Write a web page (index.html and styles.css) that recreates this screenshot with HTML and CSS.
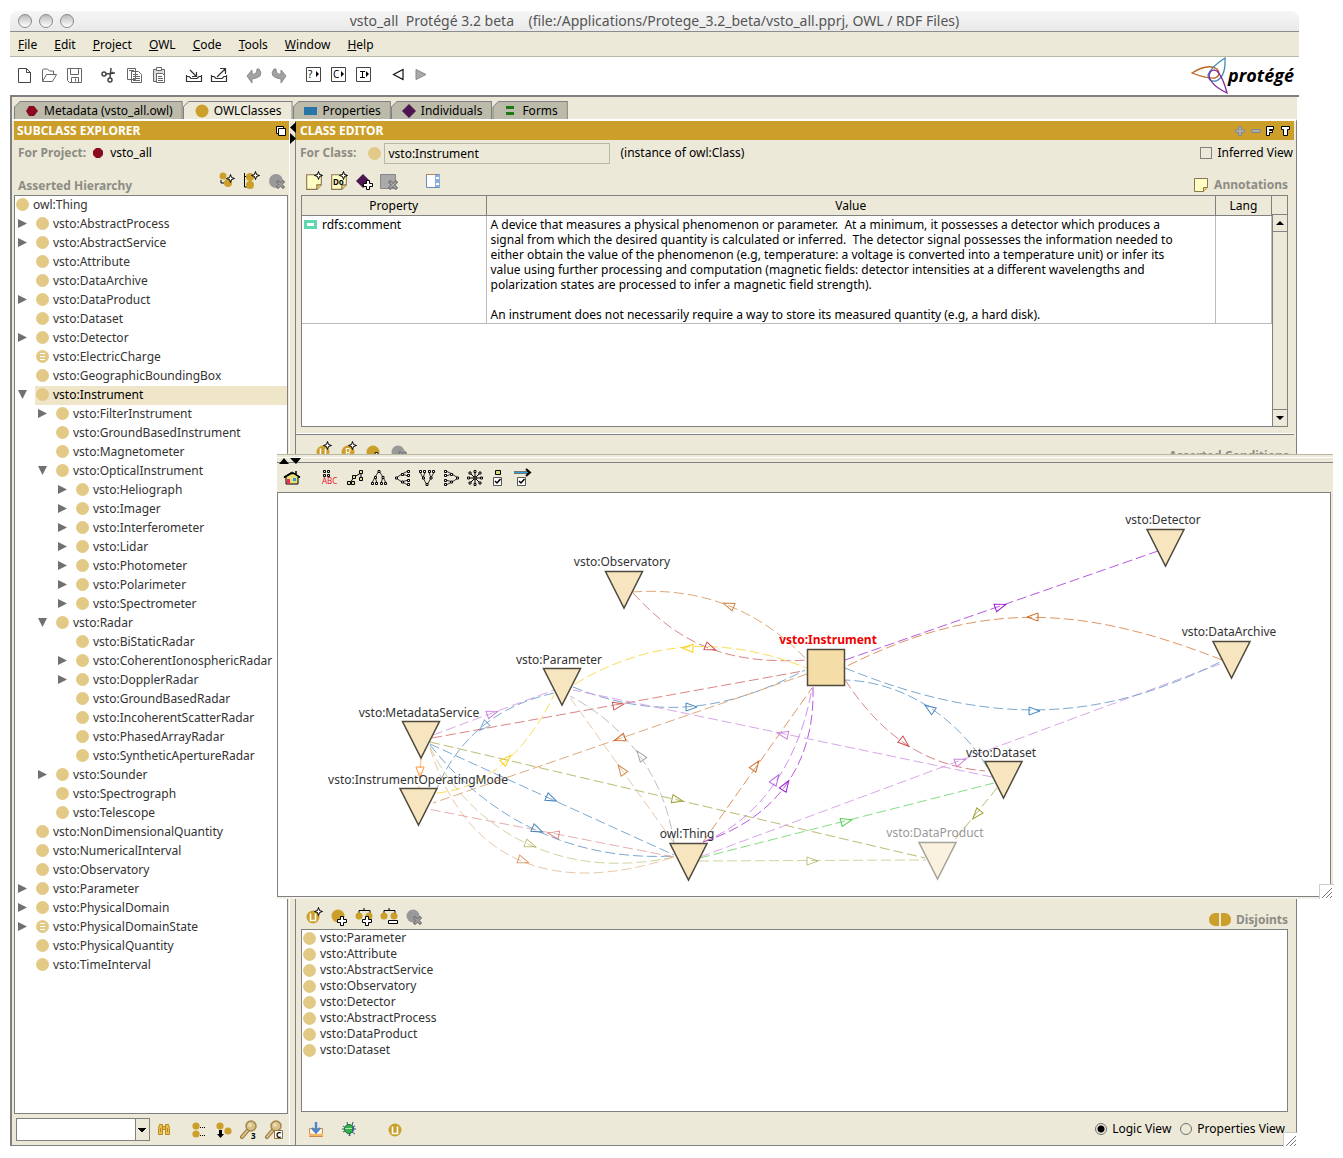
FILE: index.html
```html
<!DOCTYPE html>
<html lang="en">
<head>
<meta charset="utf-8">
<title>vsto_all Protégé 3.2 beta</title>
<link rel="stylesheet" href="styles.css">
</head>
<body>
<svg class="defs" aria-hidden="true">
  <symbol id="star" viewBox="0 0 9 9"><path d="M4.500 .5L5.500 3.500L8.500 4.500L5.500 5.500L4.500 8.500L3.500 5.500L.5 4.500L3.500 3.500Z" fill="#fff" stroke="#000"/></symbol>
  <symbol id="plus" viewBox="0 0 10 10"><path d="M3.500 .5h3v3h3v3h-3v3h-3v-3h-3v-3h3z" fill="#fff" stroke="#000"/></symbol>
  <symbol id="cross" viewBox="0 0 10 10"><path d="M1 1L9 9M9 1L1 9" stroke="#777" stroke-width="3.500"/><path d="M2 2L8 8M8 2L2 8" stroke="#aaa" stroke-width="1.200"/></symbol>
  <symbol id="u" viewBox="0 0 20 20"><circle cx="9" cy="11" r="6.500" fill="#cb9f29"/><path d="M6.500 7.500v7h5v-7" fill="none" stroke="#fff" stroke-width="1.600"/></symbol>
  <symbol id="note" viewBox="0 0 16 16"><path d="M1.500 1.500h13v9l-4 4h-9z" fill="#ffffc4" stroke="#8b7355"/><path d="M10.500 14.500v-4h4" fill="#e8d85e" stroke="#8b7355"/></symbol>
  <symbol id="lens" viewBox="0 0 18 20"><path d="M2 17L8 10" stroke="#8e7238" stroke-width="4" stroke-linecap="round"/><path d="M2 17L8 10" stroke="#d8bd84" stroke-width="2" stroke-linecap="round"/><circle cx="11" cy="6" r="5" fill="#d9c08b" stroke="#a4874b" stroke-width="1.500"/><circle cx="10" cy="5" r="2" fill="#eadbb4"/></symbol>
  <symbol id="grip" viewBox="0 0 15 15"><path d="M0 15V0h15v15z" fill="#fff"/><path d="M.5 15V.5H15" fill="none" stroke="#ccc"/><path d="M3 14L13 4M7 14L13 8M11 14L13 12" stroke="#777"/></symbol>
</svg>

<main class="window">
  <header class="titlebar">
    <div class="lights"><button aria-label="Close"></button><button aria-label="Minimize"></button><button aria-label="Zoom"></button></div>
    <h1>vsto_all&nbsp; Protégé 3.2 beta&nbsp;&nbsp;&nbsp; (file:/Applications/Protege_3.2_beta/vsto_all.pprj, OWL / RDF Files)</h1>
  </header>
  <nav class="menubar">
    <button><u>F</u>ile</button><button><u>E</u>dit</button><button><u>P</u>roject</button><button><u>O</u>WL</button><button><u>C</u>ode</button><button><u>T</u>ools</button><button><u>W</u>indow</button><button><u>H</u>elp</button>
  </nav>
  <div class="toolbar">
    <div class="group">
      <button aria-label="New"><svg width="20" height="20"><path d="M4.500 3.500h8l4 4v10h-12z M12.500 3.500v4h4" fill="#fff" stroke="#444"/></svg></button>
      <button aria-label="Open"><svg width="20" height="20"><path d="M3.500 16v-11l1-1h4l2 2h4v3M3.500 16.500L7.500 9.500h10l-4 7z" fill="none" stroke="#666"/></svg></button>
      <button aria-label="Save"><svg width="20" height="20"><path d="M3.500 3.500h14v14h-12l-2-2zM6.500 3.500v6h8v-6M7.500 17.500v-5h7v5M11.500 13.500v3" fill="none" stroke="#666"/></svg></button>
    </div>
    <div class="group">
      <button aria-label="Cut"><svg width="20" height="20"><g fill="none" stroke="#444" stroke-width="1.500"><circle cx="5" cy="9" r="2"/><circle cx="11" cy="15" r="2"/><path d="M7 9L16 8M11 13L12 3M11 9l3-2"/></g></svg></button>
      <button aria-label="Copy"><svg width="20" height="20"><g fill="#fff" stroke="#666"><path d="M3.500 3.500h8v11h-8zM7.500 6.500h7l3 3v8h-10zM5 5.500h5M9 9.500h5M9 11.500h7M9 13.500h7M9 15.500h7"/></g></svg></button>
      <button aria-label="Paste"><svg width="20" height="20"><g fill="#fff" stroke="#666"><path d="M4.500 4.500h11v12h-11z" fill="#ddd"/><path d="M7.500 2.500h5v3h-5zM7.500 8.500h6l2 2v7h-8zM9 11.500h4M9 13.500h5M9 15.500h5"/></g></svg></button>
    </div>
    <div class="group">
      <button aria-label="Check out"><svg width="20" height="20"><path d="M2.500 10v6.500h15V10M2 11.500h3l2 2h6l2-2h3M6 5l6 6M8 11.500h4.500V7" fill="none" stroke="#333" stroke-width="1.200"/></svg></button>
      <button aria-label="Check in"><svg width="20" height="20"><path d="M2.500 10v6.500h15V10M2 11.500h3l2 2h6l2-2h3M8 12l8-8M11 3.500h5.500V9" fill="none" stroke="#333" stroke-width="1.200"/></svg></button>
    </div>
    <div class="group">
      <button aria-label="Undo"><svg width="20" height="20"><path d="M3 11l5-6v4q5 1 5-5h2q6 8-7 10v4z" fill="#a2a2a2" stroke="#8a8a8a"/></svg></button>
      <button aria-label="Redo"><svg width="20" height="20"><path d="M17 11l-5-6v4q-5 1-5-5H5q-6 8 7 10v4z" fill="#a2a2a2" stroke="#8a8a8a"/></svg></button>
    </div>
    <div class="group">
      <button aria-label="Query"><svg width="20" height="20"><path d="M2.500 2.500h14v14h-14z" fill="#fff" stroke="#444"/><text x="4" y="13">?</text><path d="M12 6v6l3-3z"/></svg></button>
      <button aria-label="Class"><svg width="20" height="20"><path d="M2.500 2.500h14v14h-14z" fill="#fff" stroke="#444"/><text x="4" y="13">C</text><path d="M12 6v6l3-3z"/></svg></button>
      <button aria-label="Instance"><svg width="20" height="20"><path d="M2.500 2.500h14v14h-14z" fill="#fff" stroke="#444"/><path d="M6 6.500h5M6 12.500h5M8.500 6.500v6" stroke="#000"/><path d="M12 6v6l3-3z"/></svg></button>
    </div>
    <div class="group">
      <button aria-label="Back"><svg width="20" height="20"><path d="M14 4.500v10L4.500 9.500z" fill="#fff" stroke="#111" stroke-width="1.200"/></svg></button>
      <button aria-label="Forward"><svg width="20" height="20"><path d="M2 4.500v10l10-5z" fill="#aaa" stroke="#888"/></svg></button>
    </div>
    <div class="logo">
      <svg width="37" height="38" fill="none" stroke-width="1.300"><path d="M1 16Q17 6 26 12Q31 18 24 21Q17 22 1 16z" stroke="#c0641c"/><path d="M34 1Q35 20 25 24Q17 25 17 18Q20 10 34 1z" stroke="#4289b8"/><path d="M36 36Q19 28 18 18Q20 11 26 14Q32 20 36 36z" stroke="#7d2a9c"/></svg>
      <b>protégé</b>
    </div>
  </div>

  <div class="workspace">
    <div class="tabs" role="tablist">
      <button class="tab" role="tab"><svg width="14" height="12"><path d="M4 1h5l4 5-4 5H4L1 6z" fill="#8a0b1f"/></svg>Metadata (vsto_all.owl)</button>
      <button class="tab active" role="tab" aria-selected="true"><svg width="14" height="14"><circle cx="7" cy="7" r="6.500" fill="#cb9f29"/></svg>OWLClasses</button>
      <button class="tab" role="tab"><svg width="14" height="10"><path d="M0 1h13v8H0z" fill="#2975a8"/></svg>Properties</button>
      <button class="tab" role="tab"><svg width="14" height="14"><path d="M7 0l7 7-7 7-7-7z" fill="#4e1650"/></svg>Individuals</button>
      <button class="tab" role="tab"><svg width="14" height="10"><path d="M3 0h8v3H3zM3 6h8v3H3z" fill="#1d7a12"/></svg>Forms</button>
    </div>

    <div class="panes">
      <section class="explorer">
        <h2 class="band">SUBCLASS EXPLORER <button aria-label="Detach"><svg width="12" height="12"><path d="M1.500 1.500h7v7h-7z" fill="#fff" stroke="#000"/><path d="M3.500 3.500h7v7h-7z" fill="#fff" stroke="#000"/></svg></button></h2>
        <div class="bar for"><b>For Project:</b><svg width="12" height="12"><path d="M4 1h4l3 3v4l-3 3H4L1 8V4z" fill="#8a0b1f"/></svg><span>vsto_all</span></div>
        <div class="bar hierarchy"><b>Asserted Hierarchy</b>
          <div class="icons">
            <button aria-label="Create subclass"><svg width="20" height="20"><g fill="#cb9f29"><circle cx="6" cy="5" r="3.500"/><circle cx="11" cy="12" r="4"/></g><path d="M4 9v3h3" fill="none" stroke="#000"/><use href="#star" x="9" y="3" width="9" height="9"/></svg></button>
            <button aria-label="Create sibling"><svg width="20" height="20"><path d="M2.500 2v14h5M2 5.500h4" fill="none" stroke="#000"/><g fill="#cb9f29"><circle cx="8" cy="6" r="4"/><circle cx="8" cy="14" r="4"/></g><use href="#star" x="9" y="0" width="9" height="9"/></svg></button>
            <button aria-label="Delete class"><svg width="20" height="20"><circle cx="9" cy="10" r="7" fill="#999"/><use href="#cross" x="9" y="9" width="9" height="9"/></svg></button>
          </div>
        </div>
        <ul class="tree">
          <li><span><i class="dot"></i>owl:Thing</span></li>
          <li class="d1 shut"><span><i class="dot"></i>vsto:AbstractProcess</span></li>
          <li class="d1 shut"><span><i class="dot"></i>vsto:AbstractService</span></li>
          <li class="d1"><span><i class="dot"></i>vsto:Attribute</span></li>
          <li class="d1"><span><i class="dot"></i>vsto:DataArchive</span></li>
          <li class="d1 shut"><span><i class="dot"></i>vsto:DataProduct</span></li>
          <li class="d1"><span><i class="dot"></i>vsto:Dataset</span></li>
          <li class="d1 shut"><span><i class="dot"></i>vsto:Detector</span></li>
          <li class="d1"><span><i class="dot eq"></i>vsto:ElectricCharge</span></li>
          <li class="d1"><span><i class="dot"></i>vsto:GeographicBoundingBox</span></li>
          <li class="d1 open selected"><span><i class="dot"></i>vsto:Instrument</span></li>
          <li class="d2 shut"><span><i class="dot"></i>vsto:FilterInstrument</span></li>
          <li class="d2"><span><i class="dot"></i>vsto:GroundBasedInstrument</span></li>
          <li class="d2"><span><i class="dot"></i>vsto:Magnetometer</span></li>
          <li class="d2 open"><span><i class="dot"></i>vsto:OpticalInstrument</span></li>
          <li class="d3 shut"><span><i class="dot"></i>vsto:Heliograph</span></li>
          <li class="d3 shut"><span><i class="dot"></i>vsto:Imager</span></li>
          <li class="d3 shut"><span><i class="dot"></i>vsto:Interferometer</span></li>
          <li class="d3 shut"><span><i class="dot"></i>vsto:Lidar</span></li>
          <li class="d3 shut"><span><i class="dot"></i>vsto:Photometer</span></li>
          <li class="d3 shut"><span><i class="dot"></i>vsto:Polarimeter</span></li>
          <li class="d3 shut"><span><i class="dot"></i>vsto:Spectrometer</span></li>
          <li class="d2 open"><span><i class="dot"></i>vsto:Radar</span></li>
          <li class="d3"><span><i class="dot"></i>vsto:BiStaticRadar</span></li>
          <li class="d3 shut"><span><i class="dot"></i>vsto:CoherentIonosphericRadar</span></li>
          <li class="d3 shut"><span><i class="dot"></i>vsto:DopplerRadar</span></li>
          <li class="d3"><span><i class="dot"></i>vsto:GroundBasedRadar</span></li>
          <li class="d3"><span><i class="dot"></i>vsto:IncoherentScatterRadar</span></li>
          <li class="d3"><span><i class="dot"></i>vsto:PhasedArrayRadar</span></li>
          <li class="d3"><span><i class="dot"></i>vsto:SyntheticApertureRadar</span></li>
          <li class="d2 shut"><span><i class="dot"></i>vsto:Sounder</span></li>
          <li class="d2"><span><i class="dot"></i>vsto:Spectrograph</span></li>
          <li class="d2"><span><i class="dot"></i>vsto:Telescope</span></li>
          <li class="d1"><span><i class="dot"></i>vsto:NonDimensionalQuantity</span></li>
          <li class="d1"><span><i class="dot"></i>vsto:NumericalInterval</span></li>
          <li class="d1"><span><i class="dot"></i>vsto:Observatory</span></li>
          <li class="d1 shut"><span><i class="dot"></i>vsto:Parameter</span></li>
          <li class="d1 shut"><span><i class="dot"></i>vsto:PhysicalDomain</span></li>
          <li class="d1 shut"><span><i class="dot eq"></i>vsto:PhysicalDomainState</span></li>
          <li class="d1"><span><i class="dot"></i>vsto:PhysicalQuantity</span></li>
          <li class="d1"><span><i class="dot"></i>vsto:TimeInterval</span></li>
        </ul>
        <div class="finder">
          <select aria-label="Find class"><option></option></select>
          <button aria-label="Find"><svg width="20" height="20"><g fill="#e8c050" stroke="#b88a1c"><path d="M5.500 4.500h3v10h-4v-6zM11.500 4.500h3l1 4v6h-4z"/><path d="M8.500 6.500h3v3h-3z"/><path d="M6.500 8v4M13.500 8v4"/></g></svg></button>
          <div class="icons">
            <button aria-label="Show subclasses"><svg width="20" height="20"><g fill="#cb9f29"><circle cx="7" cy="6" r="3.600"/><circle cx="7" cy="14" r="3.600"/></g><path d="M11 7.500h6M11 15.500h6" stroke="#000" stroke-dasharray="1 1"/></svg></button>
            <button aria-label="Sort"><svg width="20" height="20"><g fill="#cb9f29"><circle cx="6" cy="6" r="3.600"/><circle cx="14" cy="11" r="3.600"/></g><path d="M5 10h3v4h2l-3.500 4L3 14h2z"/></svg></button>
            <button aria-label="Find usage"><svg width="20" height="20"><use href="#lens" x="1" y="0" width="18" height="20"/><text class="tiny" x="12" y="19">3</text></svg></button>
            <button aria-label="Find in class"><svg width="20" height="20"><use href="#lens" x="1" y="0" width="18" height="20"/><path d="M10.500 10.500h8v8h-8z" fill="#fff" stroke="#8e7238"/><text class="tiny" x="12" y="18">C</text></svg></button>
          </div>
        </div>
      </section>

      <div class="splitter"><svg width="6" height="24"><path d="M6 1v11L0 6.500zM0 12v11l6-5.500z"/></svg></div>

      <section class="editor">
        <h2 class="band">CLASS EDITOR
          <span class="icons"><svg width="57" height="12"><path d="M5.500 1.500h3v3h3v3h-3v3h-3v-3h-3v-3h3zM18.500 4.500h9v3h-9z" fill="#aaa" stroke="#888"/><path d="M33.500 1.500h7v3h-4v1h3v2h-3v3h-3zM48.500 1.500h8v3h-2v6h-4v-6h-2z" fill="#fff" stroke="#000"/></svg></span>
        </h2>
        <div class="bar for">
          <label for="cls">For Class:</label><i class="dot"></i><input id="cls" value="vsto:Instrument"><span>(instance of owl:Class)</span>
          <label class="inferred"><input type="checkbox">Inferred View</label>
        </div>
        <div class="bar tools">
          <div class="icons">
            <button aria-label="New annotation"><svg width="20" height="20"><use href="#note" x="1" y="2" width="18" height="18"/><use href="#star" x="10" y="0" width="9" height="9"/></svg></button>
            <button aria-label="New documentation"><svg width="20" height="20"><use href="#note" x="1" y="2" width="18" height="18"/><text class="tiny" x="4" y="14">Do</text><use href="#star" x="10" y="0" width="9" height="9"/></svg></button>
            <button aria-label="Add resource"><svg width="20" height="20"><path d="M9 3l7 7-7 7-7-7z" fill="#4e1650"/><use href="#plus" x="9" y="9" width="10" height="10"/></svg></button>
            <button aria-label="Delete annotation"><svg width="20" height="20"><path d="M1.500 3.500h15v14h-15z" fill="#aaa" stroke="#888"/><use href="#cross" x="9" y="9" width="10" height="10"/></svg></button>
            <button class="apart" aria-label="Columns"><svg width="20" height="20"><path d="M2.500 3.500h13v13h-13z" fill="#fff" stroke="#6c8cc0"/><path d="M2 3.500h10" stroke="#b08c50"/><path d="M11 4h5v12h-5z" fill="#8aaede"/><path d="M12 6h3v2h-3zM12 12h3v2h-3z" fill="#fff"/></svg></button>
          </div>
          <b><svg width="16" height="16"><use href="#note" width="16" height="16"/></svg>Annotations</b>
        </div>
        <div class="sheet">
          <table>
            <thead><tr><th class="prop">Property</th><th>Value</th><th class="lang">Lang</th></tr></thead>
            <tbody><tr>
              <td><i class="slot"></i>rdfs:comment</td>
              <td>A device that measures a physical phenomenon or parameter.&nbsp; At a minimum, it possesses a detector which produces a<br>signal from which the desired quantity is calculated or inferred.&nbsp; The detector signal possesses the information needed to<br>either obtain the value of the phenomenon (e.g, temperature: a voltage is converted into a temperature unit) or infer its<br>value using further processing and computation (magnetic fields: detector intensities at a different wavelengths and<br>polarization states are processed to infer a magnetic field strength).<br><br>An instrument does not necessarily require a way to store its measured quantity (e.g, a hard disk).</td>
              <td></td>
            </tr></tbody>
          </table>
          <div class="scroll"><div class="corner"></div><button aria-label="Scroll up"><svg width="8" height="4"><path d="M0 4l4-4 4 4z"/></svg></button><div class="track"></div><button aria-label="Scroll down"><svg width="8" height="4"><path d="M0 0l4 4 4-4z"/></svg></button></div>
        </div>
        <div class="conditions">
          <div class="icons">
            <button aria-label="Create expression"><svg width="20" height="20"><use href="#u" width="20" height="20"/><use href="#star" x="9" y="0" width="9" height="9"/></svg></button>
            <button aria-label="Create restriction"><svg width="20" height="20"><circle cx="9" cy="11" r="6.500" fill="#cb9f29"/><text class="white" x="6" y="15">R</text><use href="#star" x="9" y="0" width="9" height="9"/></svg></button>
            <button aria-label="Add class"><svg width="20" height="20"><circle cx="9" cy="11" r="6.500" fill="#cb9f29"/><use href="#plus" x="8" y="11" width="9" height="9"/></svg></button>
            <button aria-label="Delete row"><svg width="20" height="20"><circle cx="9" cy="11" r="6.500" fill="#999"/><use href="#cross" x="9" y="10" width="9" height="9"/></svg></button>
          </div>
          <b>Asserted Conditions</b>
        </div>
        <div class="bar tools">
          <div class="icons">
            <button aria-label="Create disjoint"><svg width="20" height="20"><use href="#u" width="20" height="20"/><use href="#star" x="10" y="1" width="9" height="9"/></svg></button>
            <button aria-label="Add disjoint class"><svg width="20" height="20"><circle cx="9" cy="10" r="6.500" fill="#cb9f29"/><use href="#plus" x="8" y="10" width="10" height="10"/></svg></button>
            <button aria-label="Add all siblings"><svg width="20" height="20"><path d="M5 7V4.500h11V7M10 4V2" fill="none" stroke="#000"/><g fill="#cb9f29"><circle cx="5" cy="10" r="3.500"/><circle cx="15" cy="10" r="3.500"/></g><use href="#plus" x="8" y="10" width="10" height="10"/></svg></button>
            <button aria-label="Remove all siblings"><svg width="20" height="20"><path d="M5 7V4.500h11V7M10 4V2" fill="none" stroke="#000"/><g fill="#cb9f29"><circle cx="5" cy="10" r="3.500"/><circle cx="15" cy="10" r="3.500"/></g><path d="M9.500 14.500h9v3h-9z" fill="#fff" stroke="#000"/></svg></button>
            <button aria-label="Delete disjoint"><svg width="20" height="20"><circle cx="9" cy="10" r="6.500" fill="#999"/><use href="#cross" x="9" y="10" width="9" height="9"/></svg></button>
          </div>
          <b><svg width="22" height="14"><path d="M10 0v13H6Q0 12 0 6.500T6 0zM12 0v13h4q6-1 6-6.500T16 0z" fill="#cb9f29"/></svg>Disjoints</b>
        </div>
        <ul class="disjoints">
          <li><i class="dot"></i>vsto:Parameter</li>
          <li><i class="dot"></i>vsto:Attribute</li>
          <li><i class="dot"></i>vsto:AbstractService</li>
          <li><i class="dot"></i>vsto:Observatory</li>
          <li><i class="dot"></i>vsto:Detector</li>
          <li><i class="dot"></i>vsto:AbstractProcess</li>
          <li><i class="dot"></i>vsto:DataProduct</li>
          <li><i class="dot"></i>vsto:Dataset</li>
        </ul>
        <div class="views">
          <div class="icons">
            <button aria-label="Save view"><svg width="20" height="20"><path d="M3.500 9.500h13v8h-13z" fill="#fff4dc" stroke="#c88b50"/><path d="M3 14l5 1h5l4-1v3H3z" fill="#f3b766"/><path d="M10 3v10M6 9l4 4.500L14 9" fill="none" stroke="#4d86cc" stroke-width="2.400"/></svg></button>
            <button class="bug" aria-label="Run tests"><svg width="20" height="20"><path d="M3 7l12 8M3 13l12-6M7 3l3 14M13 3L9 17M2 10h14" stroke="#33566e"/><circle cx="9" cy="10" r="4.500" fill="#35b24a" stroke="#1d6d38"/><path d="M12 6q4 4 0 8z" fill="#3c6490"/><path d="M5 9.500h7" stroke="#a4eba8"/></svg></button>
            <button class="apart" aria-label="Reason"><svg width="20" height="20"><use href="#u" width="20" height="20"/></svg></button>
          </div>
          <label><input type="radio" name="view" checked>Logic View</label>
          <label><input type="radio" name="view">Properties View</label>
        </div>
      </section>
    </div>
    <svg class="grip" width="15" height="15"><use href="#grip"/></svg>
  </div>
</main>

<aside class="graph">
  <div class="divider"><svg width="24" height="6"><path d="M2 6l5-6 5 6zM13 0h11l-5 6z"/></svg></div>
  <div class="graphbar">
    <button aria-label="Home"><svg width="20" height="20"><path d="M2 9l8-5 8 5H16v7H4V9z" fill="#e8df79" stroke="#000"/><path d="M2 9.500l7-4h3l6 4M14 3v4" fill="none" stroke="#000" stroke-width="1.500"/><path d="M5 11h3v5H5z" fill="#f02858"/><path d="M11 10h3v3h-3z" fill="#2a9fe0"/></svg></button>
    <button class="apart" aria-label="Labels"><svg width="20" height="20"><path d="M2.500 2.500h2v2h-2zM6.500 2.500h2v2h-2zM2.500 6.500h2v2h-2zM6.500 6.500h2v2h-2z" fill="none" stroke="#000"/><text class="abc" x="1" y="16">ABC</text></svg></button>
    <button aria-label="Spring layout"><svg width="20" height="20"><g fill="#e8e08a" stroke="#000"><path d="M5 15l4-6 7-4v8" fill="none"/><path d="M2.500 13.500h3v3h-3zM6.500 13.500h3v3h-3zM7.500 7.500h3v3h-3zM14.500 2.500h3v3h-3zM14.500 9.500h3v3h-3z"/></g></svg></button>
    <button aria-label="Tree down"><svg width="20" height="20"><g fill="#fff" stroke="#000"><path d="M10 3L6 9 3 15M10 3l4 6 3 6M6 9l2 6M14 9l-2 6" fill="none" stroke-width=".8"/><path d="M9 2.500h2v2H9zM5.500 8.500h2v2h-2zM13 8.500h2v2h-2zM2.500 14.500h2v2h-2zM6.500 14.500h2v2h-2zM11.500 14.500h2v2h-2zM15.500 14.500h2v2h-2z"/></g></svg></button>
    <button aria-label="Tree left"><svg width="20" height="20"><g fill="#fff" stroke="#000"><path d="M3 10l6-4 6-3M3 10l6 4 6 3M9 6l6 2M9 14l6-2" fill="none" stroke-width=".8"/><path d="M2.500 9h2v2h-2zM8.500 5.500h2v2h-2zM8.500 13h2v2h-2zM14.500 2.500h2v2h-2zM14.500 6.500h2v2h-2zM14.500 11.500h2v2h-2zM14.500 15.500h2v2h-2z"/></g></svg></button>
    <button aria-label="Tree up"><svg width="20" height="20"><g fill="#fff" stroke="#000"><path d="M10 17L6 10 3 4M10 17l4-7 3-6M6 10l2-6M14 10l-2-6" fill="none" stroke-width=".8"/><path d="M9 15.500h2v2H9zM5.500 9h2v2h-2zM13 9h2v2h-2zM2.500 2.500h2v2h-2zM6.500 2.500h2v2h-2zM11.500 2.500h2v2h-2zM15.500 2.500h2v2h-2z"/></g></svg></button>
    <button aria-label="Tree right"><svg width="20" height="20"><g fill="#fff" stroke="#000"><path d="M17 10l-6-4-6-3M17 10l-6 4-6 3M11 6L5 8M11 14l-6-2" fill="none" stroke-width=".8"/><path d="M15.500 9h2v2h-2zM9.500 5.500h2v2h-2zM9.500 13h2v2h-2zM3.500 2.500h2v2h-2zM3.500 6.500h2v2h-2zM3.500 11.500h2v2h-2zM3.500 15.500h2v2h-2z"/></g></svg></button>
    <button aria-label="Radial"><svg width="20" height="20"><g fill="#fff" stroke="#000"><path d="M10 3v14M3 10h14M5 5l10 10M15 5L5 15"/><path d="M9 2.500h2v2H9zM9 15.500h2v2H9zM2.500 9h2v2h-2zM15.500 9h2v2h-2zM4 4h2v2H4zM14 4h2v2h-2zM4 14h2v2H4zM14 14h2v2h-2z"/><path d="M9 9h2v2H9z" fill="#e8e08a"/></g></svg></button>
    <button aria-label="Node types"><svg width="20" height="20"><path d="M6.500 2.500h5v4h-5z" fill="#d6dc6a" stroke="#000"/><path d="M4.500 9.500h8v8h-8z" fill="#fff" stroke="#555"/><path d="M6 13l2 2 3.500-4" fill="none" stroke="#000" stroke-width="1.500"/></svg></button>
    <button aria-label="Arc types"><svg width="20" height="20"><path d="M1 4.500h15M13 1l4 3.500L13 8" fill="none" stroke="#000" stroke-width="2"/><path d="M1 4.500h14" stroke="#2a9fe0"/><path d="M4.500 9.500h8v8h-8z" fill="#fff" stroke="#555"/><path d="M6 13l2 2 3.500-4" fill="none" stroke="#000" stroke-width="1.500"/></svg></button>
  </div>
  <div class="canvas">
    <svg width="1052" height="403" viewBox="278 493 1052 403">
      <g class="edges">
        <path class="tan" d="M632 592C698 587 758 608 807 660"/>
        <path class="red" d="M633 593C672 635 715 666 807 660"/>
        <path class="gold" d="M575 684C655 636 730 638 807 668"/>
        <path class="blue" d="M573 687C655 720 725 712 805 670"/>
        <path class="lilac" d="M433 735L554 690"/>
        <path class="blue" d="M554 693C500 705 460 735 437 788"/>
        <path class="red" d="M432 738L803 671"/>
        <path class="tan" d="M807 674L433 803"/>
        <path class="gold" d="M437 793C490 788 530 745 554 695"/>
        <path class="amber" d="M421 758L419 788"/>
        <path class="olive" d="M430 742L925 858"/>
        <path class="blue" d="M430 744L674 855"/>
        <path class="blue" d="M430 745C480 808 560 862 674 856"/>
        <path class="olive pale" d="M430 747C465 820 550 884 674 857"/>
        <path class="tan pale" d="M430 748C465 860 550 898 674 857"/>
        <path class="red pale" d="M674 857L428 809"/>
        <path class="tan pale" d="M674 843L569 696"/>
        <path class="gray" d="M674 843C665 780 630 728 570 696"/>
        <path class="rust" d="M703 842L812 688"/>
        <path class="violet pale" d="M703 842C760 820 800 760 812 688"/>
        <path class="violet" d="M703 842C785 815 815 755 813 687"/>
        <path class="lilac" d="M700 857L1220 664"/>
        <path class="green" d="M700 858L994 783"/>
        <path class="olive pale" d="M699 861L926 860"/>
        <path class="lilac" d="M992 777L573 690"/>
        <path class="blue" d="M987 767C960 722 908 682 845 680"/>
        <path class="red" d="M845 680C875 725 915 765 985 771"/>
        <path class="violet" d="M845 660L1158 551"/>
        <path class="rust" d="M1222 660C1075 602 975 602 845 667"/>
        <path class="blue" d="M845 668C985 725 1095 725 1222 661"/>
        <path class="olive" d="M997 788L953 842"/>
      </g>
      <g class="heads">
        <path class="tan" d="M-6-4L5 0L-6 4Z" transform="translate(728 605) rotate(202)"/>
        <path class="red" d="M-6-4L5 0L-6 4Z" transform="translate(711 648) rotate(22)"/>
        <path class="gold" d="M-6-4L5 0L-6 4Z" transform="translate(687 648) rotate(182)"/>
        <path class="blue" d="M-6-4L5 0L-6 4Z" transform="translate(692 707)"/>
        <path class="lilac" d="M-6-4L5 0L-6 4Z" transform="translate(493 713) rotate(-19)"/>
        <path class="blue pale" d="M-6-4L5 0L-6 4Z" transform="translate(483 727) rotate(135)"/>
        <path class="red" d="M-6-4L5 0L-6 4Z" transform="translate(619 705) rotate(-11)"/>
        <path class="rust" d="M-6-4L5 0L-6 4Z" transform="translate(619 739) rotate(161)"/>
        <path class="gold" d="M-6-4L5 0L-6 4Z" transform="translate(507 759) rotate(-45)"/>
        <path class="amber" d="M-6-4L5 0L-6 4Z" transform="translate(420 773) rotate(90)"/>
        <path class="olive" d="M-6-4L5 0L-6 4Z" transform="translate(678 800) rotate(13)"/>
        <path class="blue" d="M-6-4L5 0L-6 4Z" transform="translate(552 799) rotate(24)"/>
        <path class="blue" d="M-6-4L5 0L-6 4Z" transform="translate(538 830) rotate(24)"/>
        <path class="olive pale" d="M-6-4L5 0L-6 4Z" transform="translate(531 845) rotate(20)"/>
        <path class="rust pale" d="M-6-4L5 0L-6 4Z" transform="translate(524 861) rotate(20)"/>
        <path class="red pale" d="M-6-4L5 0L-6 4Z" transform="translate(553 834) rotate(190)"/>
        <path class="tan" d="M-6-4L5 0L-6 4Z" transform="translate(621 769) rotate(235)"/>
        <path class="gray" d="M-6-4L5 0L-6 4Z" transform="translate(640 755) rotate(234)"/>
        <path class="rust" d="M-6-4L5 0L-6 4Z" transform="translate(756 765) rotate(-55)"/>
        <path class="violet pale" d="M-6-4L5 0L-6 4Z" transform="translate(776 779) rotate(-57)"/>
        <path class="violet" d="M-6-4L5 0L-6 4Z" transform="translate(786 785) rotate(-57)"/>
        <path class="lilac" d="M-6-4L5 0L-6 4Z" transform="translate(961 761) rotate(-20)"/>
        <path class="green" d="M-6-4L5 0L-6 4Z" transform="translate(847 821) rotate(-14)"/>
        <path class="olive pale" d="M-6-4L5 0L-6 4Z" transform="translate(813 861)"/>
        <path class="lilac" d="M-6-4L5 0L-6 4Z" transform="translate(782 734) rotate(192)"/>
        <path class="blue" d="M-6-4L5 0L-6 4Z" transform="translate(929 708) rotate(215)"/>
        <path class="red" d="M-6-4L5 0L-6 4Z" transform="translate(905 743) rotate(40)"/>
        <path class="violet" d="M-6-4L5 0L-6 4Z" transform="translate(1001 606) rotate(-19)"/>
        <path class="rust" d="M-6-4L5 0L-6 4Z" transform="translate(1032 617) rotate(180)"/>
        <path class="blue" d="M-6-4L5 0L-6 4Z" transform="translate(1035 711)"/>
        <path class="olive" d="M-6-4L5 0L-6 4Z" transform="translate(976 815) rotate(130)"/>
      </g>
      <g class="nodes">
        <path d="M605.500 571.500h37L624 608z"/>
        <path d="M543.500 668.500h37L562 705z"/>
        <path d="M402.500 721.500h37L421 758z"/>
        <path d="M400 788.500h37L418.500 825z"/>
        <path d="M670 843.500h37L688.500 880z"/>
        <path d="M985 761.500h37L1003.500 798z"/>
        <path d="M1147 529.500h37L1165.500 566z"/>
        <path d="M1213 641.500h37L1231.500 678z"/>
        <path class="faded" d="M919 842.500h37L937.500 879z"/>
        <rect x="807.500" y="649.500" width="37" height="36"/>
      </g>
      <g class="labels">
        <text x="622" y="566">vsto:Observatory</text>
        <text x="559" y="664">vsto:Parameter</text>
        <text x="419" y="717">vsto:MetadataService</text>
        <text x="418" y="784">vsto:InstrumentOperatingMode</text>
        <text x="687" y="838">owl:Thing</text>
        <text x="1001" y="757">vsto:Dataset</text>
        <text x="1163" y="524">vsto:Detector</text>
        <text x="1229" y="636">vsto:DataArchive</text>
        <text class="faded" x="935" y="837">vsto:DataProduct</text>
        <text class="focus" x="828" y="644">vsto:Instrument</text>
      </g>
    </svg>
  </div>
  <svg class="grip" width="15" height="15"><use href="#grip"/></svg>
</aside>
</body>
</html>
```
FILE: styles.css
```css
* { box-sizing: border-box; }
body {
  margin: 0;
  min-height: 100vh;
  padding: 11px 44px 12px 10px;
  background: #fff;
  font: 12px/16px "Noto Sans", "Open Sans", sans-serif;
  color: #000;
  display: flex;
  position: relative;
}
.defs { position: absolute; width: 0; height: 0; }
button { padding: 0; border: 0; background: none; font: inherit; color: inherit; }
svg { display: block; flex: none; }
h1, h2, ul { margin: 0; padding: 0; list-style: none; }
svg text { font-size: 10px; }
svg .tiny { font-size: 8px; font-weight: bold; }
svg .white { fill: #fff; }
svg .abc { font-size: 8px; fill: #e81830; }

/* Application window */
.window { flex: 1; min-width: 0; display: flex; flex-direction: column; }
.titlebar {
  height: 21px;
  display: flex;
  align-items: center;
  position: relative;
  border-radius: 8px 8px 0 0;
  border-bottom: 1px solid #8c8c8c;
  background: linear-gradient(#f6f6f6, #e9e9e9);
}
.titlebar h1 { flex: 1; text-align: center; font-size: 14px; font-weight: normal; color: #555; line-height: 20px; padding-right: 81px; white-space: nowrap; }
.lights { display: flex; gap: 7px; padding-left: 8px; width: 81px; }
.lights button { width: 14px; height: 14px; border-radius: 50%; border: 1px solid #888; background: linear-gradient(#bbb, #fff); }
.menubar { height: 25px; display: flex; align-items: center; gap: 17px; padding: 2px 8px 0; background: #ece9d8; border-bottom: 1px solid #b9b8a5; }
.toolbar { height: 40px; display: flex; align-items: center; gap: 10px; padding: 0 5px 3px 1px; background: #fff; border-bottom: 2px solid #808080; }
.group { display: flex; }
.group button { width: 25px; display: flex; justify-content: center; }
.logo { display: flex; align-items: center; margin-left: auto; }
.logo svg { margin-bottom: -2px; }
.logo b { font: italic bold 18px/24px "Open Sans", sans-serif; }

.workspace { flex: 1; display: flex; flex-direction: column; position: relative; margin-right: 2px; padding-top: 4px; background: #ece9d8; border-left: 2px solid #808080; border-bottom: 1px solid #808080; }
.tabs { display: flex; padding-left: 2px; height: 18px; }
.tab {
  display: flex; align-items: center; gap: 5px;
  padding: 1px 10px 0 11px;
  position: relative; isolation: isolate;
  background: #808080;
  clip-path: polygon(0 6px, 6px 0, 100% 0, 100% 100%, 0 100%);
}
.tab::before { content: ""; position: absolute; z-index: -1; inset: 1px 1px 0 1px; background: #bcbbaa; clip-path: polygon(0 5px, 5px 0, 100% 0, 100% 100%, 0 100%); }
.tab.active { padding-left: 12px; padding-right: 11px; }
.tab.active::before { background: #ece9d8; }
.panes { flex: 1; display: flex; border-top: 2px solid #fff; border-right: 1px solid #808080; }
.band { height: 19px; display: flex; align-items: center; justify-content: space-between; padding: 0 3px; background: #cb9f29; color: #fff; font-size: 12px; line-height: 19px; }
.explorer .band { padding-right: 2px; }
.bar { display: flex; align-items: center; color: #000; }
.bar b, .bar > label:first-child, .conditions b { color: #8d8c84; font-weight: bold; }
.icons { display: flex; align-items: center; }
.icons button { width: 25px; }
.dot { flex: none; width: 13px; height: 13px; border-radius: 50%; background: #e3c986; }
.dot.eq { background: linear-gradient(#fff 0 1px, transparent 1px 3px, #fff 3px 4px, transparent 4px 6px, #fff 6px 7px, transparent 7px) 4px 3px / 5px 7px no-repeat #e3c986; }

/* Subclass explorer */
.explorer { width: 278px; display: flex; flex-direction: column; padding-left: 2px; border-right: 1px solid #fff; }
.for { height: 26px; padding-left: 4px; gap: 6px; }
.hierarchy { height: 29px; padding: 0 0 0 4px; justify-content: space-between; }
.hierarchy b { padding-top: 10px; }
.hierarchy .icons { margin-right: -3px; }
.tree { flex: 1; margin-right: 1px; background: #fff; border: 1px solid #808080; color: #333; }
.tree li { display: flex; height: 19px; }
.tree li::before { content: ""; flex: none; width: 9px; height: 9px; margin: 4px 8px 6px 3px; }
.tree li:first-child::before { display: none; }
.tree span { flex: 1; display: flex; align-items: center; gap: 4px; padding: 0 0 2px 1px; white-space: nowrap; }
.tree .d2 { padding-left: 20px; }
.tree .d3 { padding-left: 40px; }
.tree .shut::before { background: #707070; clip-path: polygon(0 0, 100% 50%, 0 100%); }
.tree .open::before { background: #707070; clip-path: polygon(0 0, 100% 0, 50% 100%); }
.tree .selected span { background: #efe5c9; color: #000; }
.finder { height: 31px; display: flex; align-items: center; padding-left: 2px; }
.finder select {
  appearance: none; width: 134px; height: 23px; margin-right: 4px; border: 1px solid #808080; border-radius: 0;
  background:
    linear-gradient(#000, #000) right 3px top 9px / 8px 1px no-repeat,
    linear-gradient(#000, #000) right 4px top 10px / 6px 1px no-repeat,
    linear-gradient(#000, #000) right 5px top 11px / 4px 1px no-repeat,
    linear-gradient(#000, #000) right 6px top 12px / 2px 1px no-repeat,
    linear-gradient(90deg, #808080 1px, #ece9d8 1px) right / 14px 100% no-repeat #fff;
}
.finder .icons { margin-left: auto; }
.splitter { width: 6px; border-right: 1px solid #808080; }

/* Class editor */
.editor { flex: 1; min-width: 0; display: flex; flex-direction: column; }
.editor .band { margin-right: 2px; padding: 0 4px; }
.editor .for { padding: 0 4px; }
.editor .for > label:first-child { padding-right: 6px; }
.editor .for input:not([type]) { width: 226px; height: 21px; margin-left: -3px; padding: 0 3px; border: 1px solid #b9b8a5; background: #ece9d8; font: inherit; }
.editor .for span { padding-left: 4px; }
.inferred { margin-left: auto; display: flex; align-items: center; gap: 5px; margin-right: -1px; }
.inferred input { appearance: none; width: 12px; height: 12px; margin: 0; border: 1px solid #808080; background: #ece9d8; }
.tools { height: 29px; padding: 0 8px; justify-content: space-between; }
.tools b { display: flex; align-items: center; gap: 5px; padding-top: 8px; }
.icons .apart { margin-left: 20px; }
.sheet { display: flex; height: 232px; flex: none; margin: 0 8px 0 5px; border: 1px solid #808080; background: #fff; }
table { flex: 1; border-collapse: collapse; table-layout: fixed; align-self: flex-start; line-height: 15px; }
th { height: 19px; padding: 0; font-weight: normal; background: #ece9d8; border: solid #808080; border-width: 0 1px 1px 0; }
.prop { width: 184px; }
.lang { width: 56px; }
td { height: 107px; padding: 1px 4px; vertical-align: top; white-space: nowrap; border: solid #bbb; border-width: 0 1px 1px 0; }
.slot { display: inline-block; width: 13px; height: 9px; margin: 0 5px 0 -2px; border: 3px solid #5fd8ad; background: #fff; }
.scroll { width: 15px; display: flex; flex-direction: column; background: #ece9d8; }
.corner { height: 19px; border-bottom: 1px solid #808080; }
.scroll button { height: 16px; display: flex; align-items: center; justify-content: center; border-left: 1px solid #808080; }
.track { flex: 1; border: solid #808080; border-width: 1px 0 1px 1px; }
.conditions { flex: 1; display: flex; align-items: flex-start; justify-content: space-between; margin-top: 7px; margin-right: 2px; padding: 6px 5px 0 18px; border-top: 1px solid #808080; box-shadow: 0 -1px #fff; }
.conditions b { padding-top: 7px; }
.conditions + .tools { padding-top: 2px; }
.disjoints { flex: none; min-height: 183px; margin: 0 8px 0 5px; border: 1px solid #808080; background: #fff; color: #333; }
.disjoints li { height: 16px; display: flex; align-items: center; gap: 4px; padding-left: 1px; }
.views { height: 33px; display: flex; align-items: center; gap: 9px; padding: 1px 11px 0 10px; }
.views .icons { margin-right: auto; }
.views .bug { width: 34px; padding-left: 9px; }
.views .apart { margin-left: 21px; }
.views label { display: flex; align-items: center; gap: 5px; }
.views input { appearance: none; width: 12px; height: 12px; margin: 0; border: 1px solid #707070; border-radius: 50%; background: #ece9d8; }
.views input:checked { background: radial-gradient(#000 0 3px, transparent 4px); }
.grip { position: absolute; right: -1px; bottom: -2px; }

/* Relation graph window floating over the editor */
.graph { position: absolute; left: 277px; top: 454px; width: 1056px; background: #ece9d8; border-bottom: 2px solid #f4f2e8; }
.divider { height: 9px; padding-top: 4px; border-bottom: 1px solid #808080; background: linear-gradient(#b9b8a5 1px, #ece9d8 1px 3px, #fff 3px 4px, #ece9d8 4px); }
.graphbar { height: 29px; display: flex; align-items: center; padding-left: 5px; }
.graphbar button { width: 24px; }
.graphbar .apart { margin-left: 15px; }
.canvas { margin-right: 2px; border: 1px solid #808080; background: #fff; overflow: hidden; }
.edges { fill: none; stroke-dasharray: 10 4; opacity: .7; }
.heads { fill: none; }
.tan { stroke: #d08745; }
.red { stroke: #cc5252; }
.gold { stroke: #f8d010; }
.blue { stroke: #4585bd; }
.lilac { stroke: #ca82dd; }
.amber { stroke: #ff9838; }
.olive { stroke: #a0a038; }
.gray { stroke: #a5a5a5; }
.rust { stroke: #d06a24; }
.violet { stroke: #9a14d2; }
.green { stroke: #50cf50; }
.pale { stroke-opacity: .65; }
.nodes { fill: #f7e5c0; stroke: #4f4a3c; stroke-width: 1.5; }
.nodes rect { fill: #f4dda6; }
.nodes .faded { opacity: .5; }
.labels { fill: #333; text-anchor: middle; }
.labels text { font-size: 12px; }
.labels .faded { fill: #999; }
.labels .focus { fill: #f00000; font-weight: bold; }
```
